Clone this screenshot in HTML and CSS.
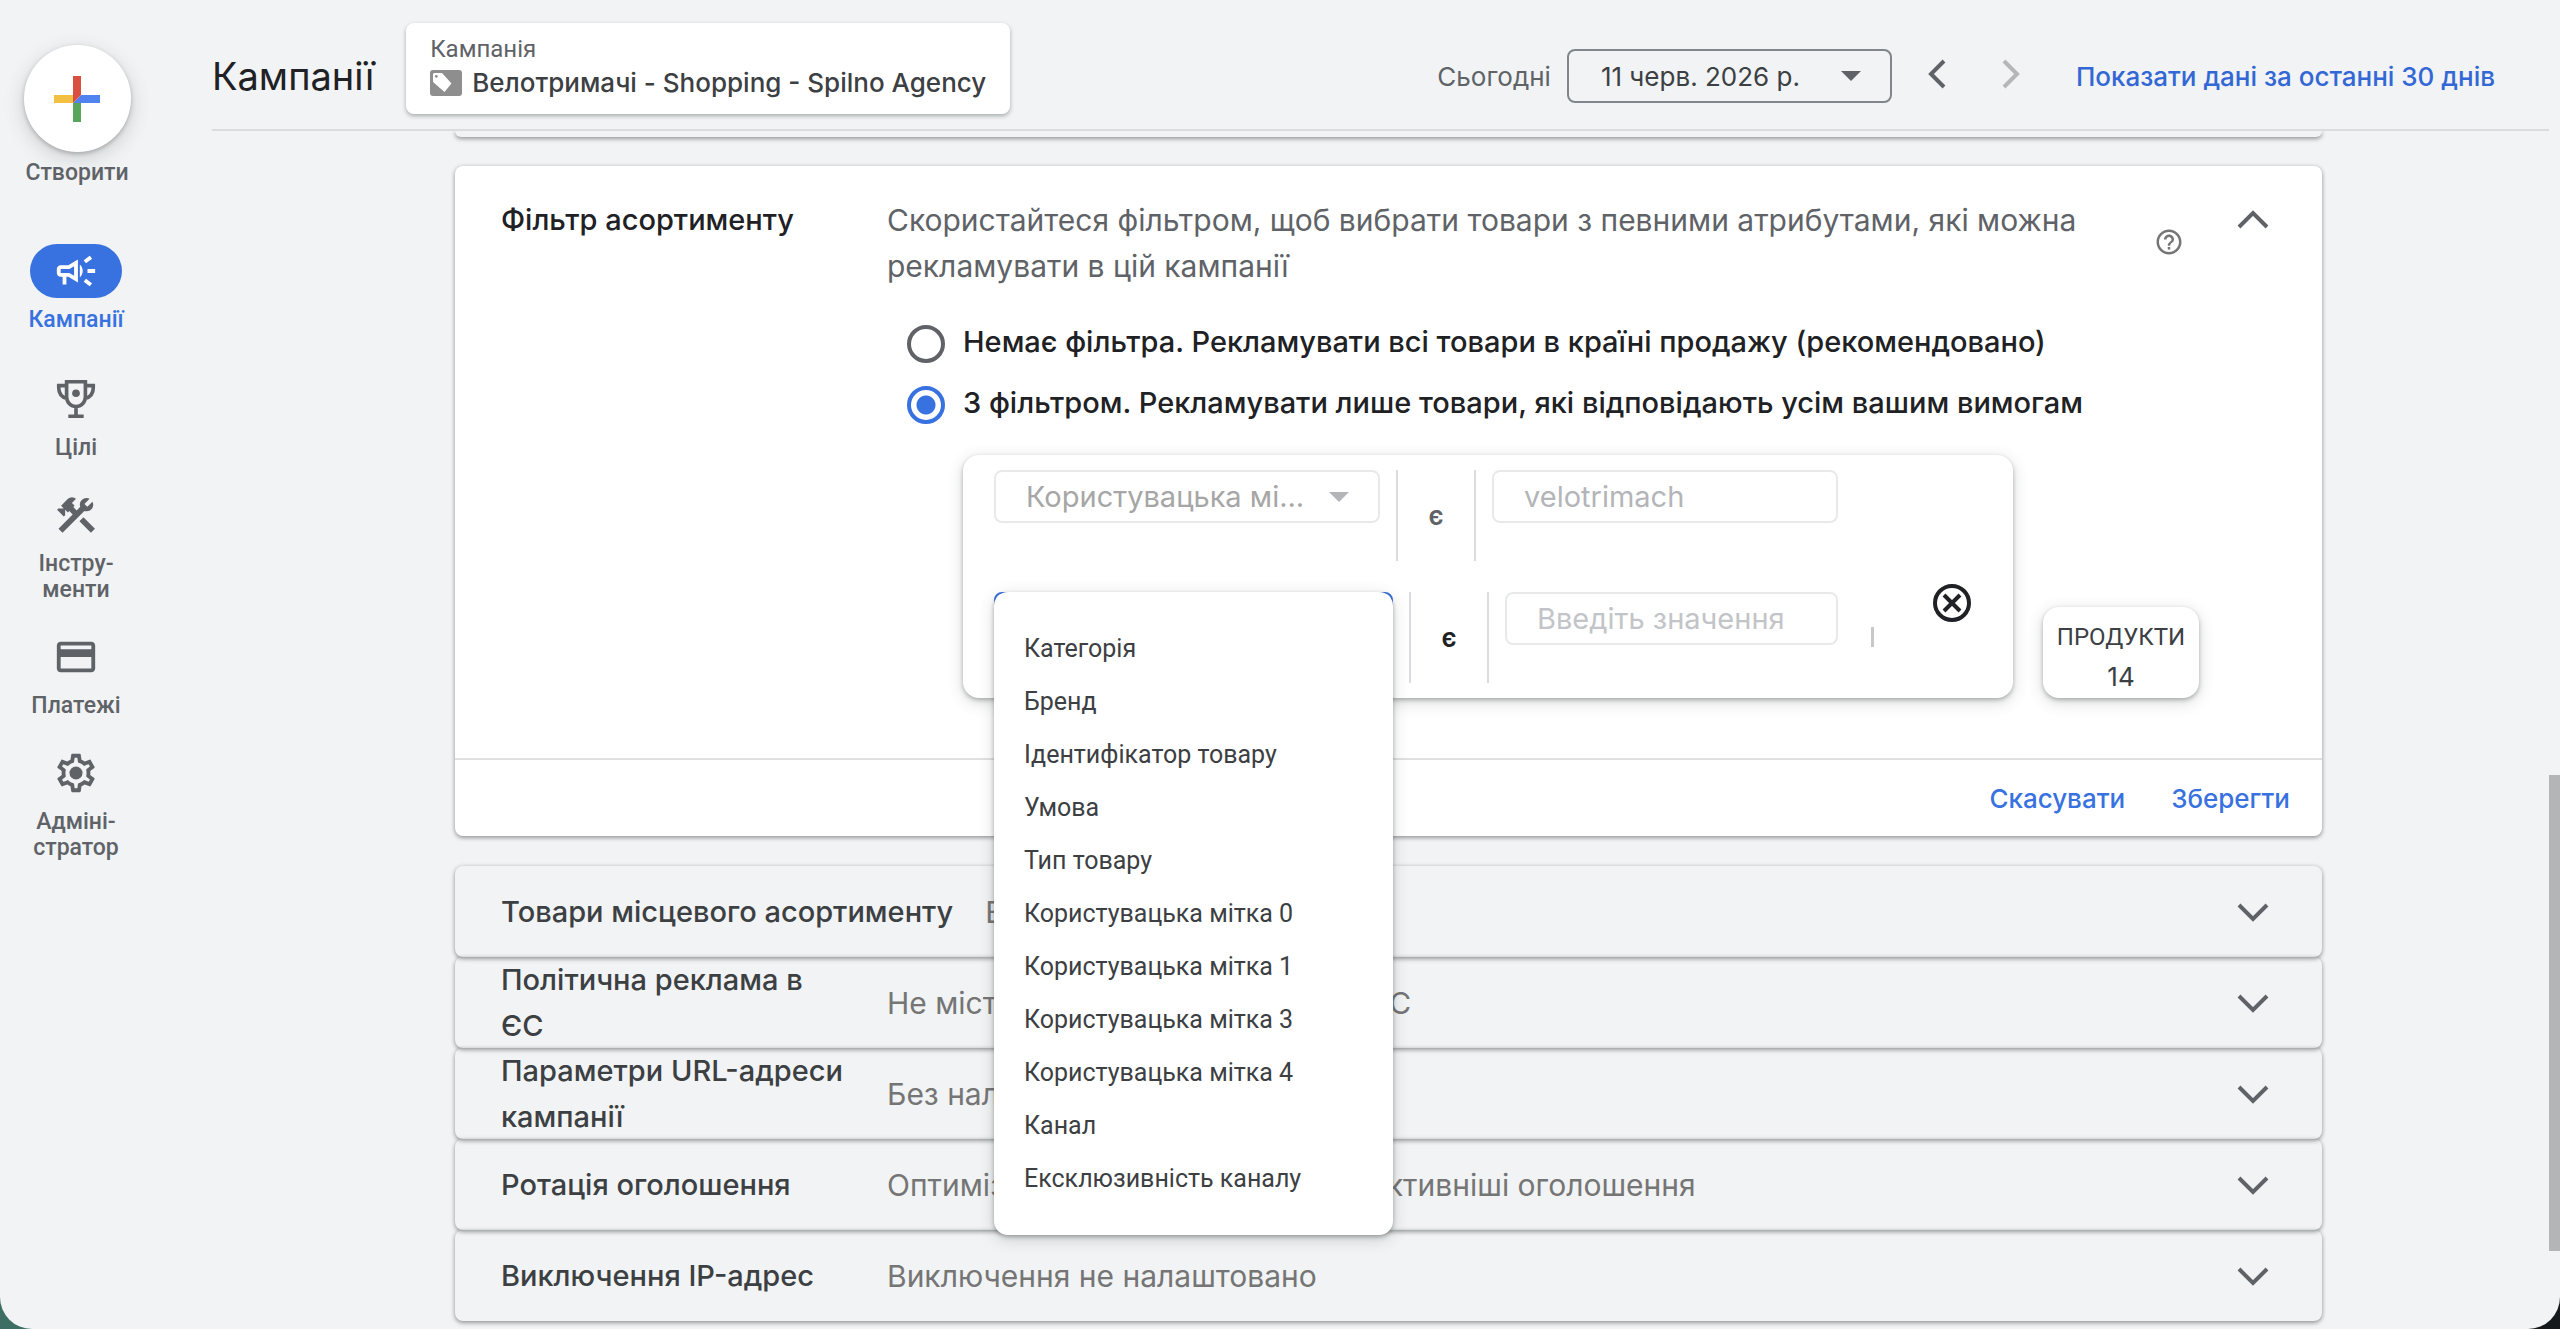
FILE: index.html
```html
<!DOCTYPE html>
<html lang="uk">
<head>
    <meta charset="UTF-8">
    <meta name="viewport" content="width=device-width, initial-scale=1.0">
    <title>Кампанії</title>
    <link rel="stylesheet" href="styles.css">
</head>
<body>
    <div class="app">
        <aside class="sidebar">
            <button class="create-btn" type="button">
                <span class="create-circle">
                    <svg viewBox="0 0 46 46" width="46" height="46">
                        <path fill="#f2c043" d="M0 19h19v8H0z"/>
                        <path fill="#58a55c" d="M19 27h8v19h-8z"/>
                        <path fill="#5083ef" d="M27 19h19v8H19z"/>
                        <path fill="#d95040" d="M19 0h8v19l-8 8z"/>
                    </svg>
                </span>
                Створити
            </button>
            <nav class="nav">
                <a class="nav-item active" href="#">
                    <span class="nav-icon">
                        <svg viewBox="0 0 24 24"><path d="M18 11v2h4v-2h-4zm-2 6.61c.96.71 2.21 1.65 3.2 2.39.4-.53.8-1.07 1.2-1.6-.99-.74-2.24-1.68-3.2-2.4-.4.54-.8 1.08-1.2 1.61zM20.4 5.6c-.4-.53-.8-1.07-1.2-1.6-.99.74-2.24 1.68-3.2 2.4.4.53.8 1.07 1.2 1.6.96-.72 2.21-1.65 3.2-2.4zM4 9c-1.1 0-2 .9-2 2v2c0 1.1.9 2 2 2h1v4h2v-4h1l5 3V6L8 9H4zm5.03 1.71L11 9.53v4.94l-1.97-1.18-.48-.29H4v-2h4.55l.48-.29zM15.5 12c0-1.33-.58-2.53-1.5-3.35v6.69c.92-.81 1.5-2.01 1.5-3.34z"/></svg>
                    </span>
                    Кампанії
                </a>
                <a class="nav-item" href="#">
                    <span class="nav-icon">
                        <svg viewBox="0 0 24 24">
                            <path fill="none" stroke="currentColor" stroke-width="1.9" d="M7.1 3h9.8v8a4.9 4.9 0 0 1-9.8 0zM7 5H3v1.2c0 2.7 1.6 4.8 4.4 5.6M17 5h4v1.2c0 2.7-1.6 4.8-4.4 5.6M12 16v5M8 21h8"/>
                            <circle cx="12" cy="9" r="2"/>
                        </svg>
                    </span>
                    Цілі
                </a>
                <a class="nav-item" href="#">
                    <span class="nav-icon">
                        <svg viewBox="0 0 24 24"><path d="M13.78 15.3l6 6 2.11-2.16-6-6-2.11 2.16M17.5 10.1c-.39 0-.81-.05-1.14-.19L4.97 21.25l-2.11-2.11 7.41-7.4L8.5 9.96l-.72.7-1.45-1.41v2.86l-.7.7-3.52-3.56.7-.7h2.81l-1.4-1.41 3.56-3.56a2.98 2.98 0 0 1 4.22 0L9.89 5.74l1.41 1.4-.71.71 1.79 1.78 1.82-1.88c-.14-.33-.2-.75-.2-1.12 0-1.97 1.56-3.52 3.5-3.52.59 0 1.11.14 1.58.42L16.41 6.2l1.5 1.5 2.67-2.67c.28.47.42.97.42 1.6 0 1.92-1.55 3.47-3.5 3.47z"/></svg>
                    </span>
                    Інстру-<br>менти
                </a>
                <a class="nav-item" href="#">
                    <span class="nav-icon">
                        <svg viewBox="0 0 24 24"><path d="M20 4H4c-1.11 0-1.99.89-1.99 2L2 18c0 1.11.89 2 2 2h16c1.11 0 2-.89 2-2V6c0-1.11-.89-2-2-2zm0 14H4v-6h16v6zm0-10H4V6h16v2z"/></svg>
                    </span>
                    Платежі
                </a>
                <a class="nav-item" href="#">
                    <span class="nav-icon">
                        <svg viewBox="0 0 24 24">
                            <path d="M19.43 12.98c.04-.32.07-.64.07-.98 0-.34-.03-.66-.07-.98l2.11-1.65c.19-.15.24-.42.12-.64l-2-3.46c-.09-.16-.26-.25-.44-.25-.06 0-.12.01-.17.03l-2.49 1c-.52-.4-1.08-.73-1.69-.98l-.38-2.65C14.46 2.18 14.25 2 14 2h-4c-.25 0-.46.18-.49.42l-.38 2.65c-.61.25-1.17.59-1.69.98l-2.49-1c-.06-.02-.12-.03-.18-.03-.17 0-.34.09-.43.25l-2 3.46c-.13.22-.07.49.12.64l2.11 1.65c-.04.32-.07.65-.07.98 0 .33.03.66.07.98l-2.11 1.65c-.19.15-.24.42-.12.64l2 3.46c.09.16.26.25.44.25.06 0 .12-.01.17-.03l2.49-1c.52.4 1.08.73 1.69.98l.38 2.65c.03.24.24.42.49.42h4c.25 0 .46-.18.49-.42l.38-2.65c.61-.25 1.17-.59 1.69-.98l2.49 1c.06.02.12.03.18.03.17 0 .34-.09.43-.25l2-3.46c.12-.22.07-.49-.12-.64l-2.11-1.65zm-1.98-1.71c.04.31.05.52.05.73 0 .21-.02.43-.05.73l-.14 1.13.89.7 1.08.84-.7 1.21-1.27-.51-1.04-.42-.9.68c-.43.32-.84.56-1.25.73l-1.06.43-.16 1.13-.2 1.35h-1.4l-.19-1.35-.16-1.13-1.06-.43c-.43-.18-.83-.41-1.23-.71l-.91-.7-1.06.43-1.27.51-.7-1.21 1.08-.84.89-.7-.14-1.13c-.03-.31-.05-.54-.05-.74s.02-.43.05-.73l.14-1.13-.89-.7-1.08-.84.7-1.21 1.27.51 1.04.42.9-.68c.43-.32.84-.56 1.25-.73l1.06-.43.16-1.13.2-1.35h1.39l.19 1.35.16 1.13 1.06.43c.43.18.83.41 1.23.71l.91.7 1.06-.43 1.27-.51.7 1.21-1.07.85-.89.7.14 1.13z"/>
                            <circle cx="12" cy="12" r="3.4"/>
                        </svg>
                    </span>
                    Адміні-<br>стратор
                </a>
            </nav>
        </aside>

        <main class="main">
            <header class="topbar">
                <h1>Кампанії</h1>
                <button class="campaign-card" type="button">
                    <span class="campaign-label">Кампанія</span>
                    <span class="campaign-name">
                        <svg viewBox="0 0 32 26" width="32" height="26">
                            <rect width="32" height="26" rx="3" fill="#8e8e8e"/>
                            <path fill="#fff" d="M3 4.500a1.500 1.500 0 0 1 1.500-1.500H11a2 2 0 0 1 1.500.6l9 9.900-7 8.500L3.600 12.500A2 2 0 0 1 3 11z"/>
                            <circle cx="6.300" cy="6.300" r="1.400" fill="#8e8e8e"/>
                        </svg>
                        Велотримачі - Shopping - Spilno Agency
                    </span>
                </button>
                <div class="date-range">
                    <span class="date-label">Сьогодні</span>
                    <button class="date-btn" type="button">
                        11 черв. 2026 р.
                        <svg viewBox="0 0 20 10" width="20" height="10"><path d="M0 0h20L10 10z"/></svg>
                    </button>
                    <button class="step-btn" type="button" aria-label="Назад">
                        <svg viewBox="0 0 18 30" width="18" height="30"><path d="M16 2L3 15l13 13"/></svg>
                    </button>
                    <button class="step-btn" type="button" aria-label="Вперед" disabled>
                        <svg viewBox="0 0 18 30" width="18" height="30"><path d="M2 2l13 13L2 28"/></svg>
                    </button>
                    <a class="last-days" href="#">Показати дані за останні 30 днів</a>
                </div>
            </header>

            <div class="content">
                <div class="panel-end"></div>

                <section class="card">
                    <div class="card-head">
                        <h2 class="row-title">Фільтр асортименту</h2>
                        <p class="card-desc">Скористайтеся фільтром, щоб вибрати товари з певними атрибутами, які можна рекламувати в цій кампанії</p>
                        <button class="help-btn" type="button" aria-label="Довідка">
                            <svg viewBox="0 0 24 24" width="30" height="30"><path d="M11 18h2v-2h-2v2zm1-16C6.480 2 2 6.480 2 12s4.480 10 10 10 10-4.480 10-10S17.520 2 12 2zm0 18c-4.410 0-8-3.590-8-8s3.590-8 8-8 8 3.590 8 8-3.590 8-8 8zm0-14c-2.210 0-4 1.790-4 4h2c0-1.100.9-2 2-2s2 .9 2 2c0 2-3 1.750-3 5h2c0-2.250 3-2.500 3-5 0-2.210-1.790-4-4-4z"/></svg>
                        </button>
                        <button class="toggle-btn" type="button" aria-label="Згорнути">
                            <svg class="chevron" viewBox="0 0 32 20" width="32" height="20"><path d="M2 17L16 3l14 14"/></svg>
                        </button>
                    </div>

                    <div class="filter">
                        <div class="options">
                            <label class="option"><input type="radio" name="filter"><span>Немає фільтра. Рекламувати всі товари в країні продажу (рекомендовано)</span></label>
                            <label class="option"><input type="radio" name="filter" checked><span>З фільтром. Рекламувати лише товари, які відповідають усім вашим вимогам</span></label>
                        </div>

                        <div class="filter-row">
                            <div class="conditions">
                                <div class="condition">
                                    <button class="select" type="button" disabled>
                                        Користувацька мі...
                                        <svg viewBox="0 0 20 10" width="20" height="10"><path d="M0 0h20L10 10z"/></svg>
                                    </button>
                                    <span class="operator">є</span>
                                    <input class="value" type="text" value="velotrimach" aria-label="Значення" disabled>
                                    <div class="actions"></div>
                                </div>
                                <div class="condition current">
                                    <div class="select-wrap">
                                        <button class="select" type="button" aria-label="Атрибут"></button>
                                        <ul class="menu">
                                            <li>Категорія</li>
                                            <li>Бренд</li>
                                            <li>Ідентифікатор товару</li>
                                            <li>Умова</li>
                                            <li>Тип товару</li>
                                            <li>Користувацька мітка 0</li>
                                            <li>Користувацька мітка 1</li>
                                            <li>Користувацька мітка 3</li>
                                            <li>Користувацька мітка 4</li>
                                            <li>Канал</li>
                                            <li>Ексклюзивність каналу</li>
                                        </ul>
                                    </div>
                                    <span class="operator">є</span>
                                    <input class="value" type="text" placeholder="Введіть значення" aria-label="Значення">
                                    <div class="actions">
                                        <span class="separator"></span>
                                        <button class="remove-btn" type="button" aria-label="Видалити">
                                            <svg viewBox="0 0 38 38" width="38" height="38"><circle cx="19" cy="19" r="17"/><path d="M11 11l16 16M27 11L11 27"/></svg>
                                        </button>
                                    </div>
                                </div>
                            </div>
                            <div class="products">
                                <span class="products-label">ПРОДУКТИ</span>
                                <span class="products-count">14</span>
                            </div>
                        </div>
                    </div>

                    <div class="card-actions">
                        <button class="text-btn" type="button">Скасувати</button>
                        <button class="text-btn" type="button">Зберегти</button>
                    </div>
                </section>

                <div class="rows">
                    <button class="row" type="button">
                        <span class="row-title long">Товари місцевого асортименту</span>
                        <span class="row-value">Вимкнено</span>
                        <svg class="chevron" viewBox="0 0 32 20" width="32" height="20"><path d="M2 3l14 14L30 3"/></svg>
                    </button>
                    <button class="row" type="button">
                        <span class="row-title">Політична реклама в ЄС</span>
                        <span class="row-value">Не містить політичну рекламу в ЄС</span>
                        <svg class="chevron" viewBox="0 0 32 20" width="32" height="20"><path d="M2 3l14 14L30 3"/></svg>
                    </button>
                    <button class="row" type="button">
                        <span class="row-title">Параметри URL-адреси кампанії</span>
                        <span class="row-value">Без налаштувань</span>
                        <svg class="chevron" viewBox="0 0 32 20" width="32" height="20"><path d="M2 3l14 14L30 3"/></svg>
                    </button>
                    <button class="row" type="button">
                        <span class="row-title">Ротація оголошення</span>
                        <span class="row-value">Оптимізувати: показувати найефективніші оголошення</span>
                        <svg class="chevron" viewBox="0 0 32 20" width="32" height="20"><path d="M2 3l14 14L30 3"/></svg>
                    </button>
                    <button class="row" type="button">
                        <span class="row-title">Виключення IP-адрес</span>
                        <span class="row-value">Виключення не налаштовано</span>
                        <svg class="chevron" viewBox="0 0 32 20" width="32" height="20"><path d="M2 3l14 14L30 3"/></svg>
                    </button>
                </div>
            </div>
        </main>
        <div class="scroll-thumb"></div>
    </div>
</body>
</html>
```

FILE: styles.css
```css
* {
    box-sizing: border-box;
}
body {
    margin: 0;
    background: linear-gradient(to right, #3d6e63 50%, #16191b 50%);
    font-family: Inter, "Noto Sans", sans-serif;
    font-size: 29px;
    color: #202124;
}
button {
    margin: 0;
    padding: 0;
    border: none;
    background: none;
    font: inherit;
    color: inherit;
    cursor: pointer;
}
svg {
    display: block;
    flex: none;
    fill: currentColor;
}
a {
    text-decoration: none;
}
.app {
    position: relative;
    display: flex;
    min-height: 100vh;
    background: #f1f3f4;
    border-radius: 0 0 32px 32px;
    overflow: hidden;
}

/* left navigation */
.sidebar {
    flex: none;
    width: 152px;
    padding-top: 45px;
    font-family: Roboto, sans-serif;
    font-size: 23px;
    font-weight: 500;
    line-height: 26px;
    color: #5f6368;
    text-align: center;
}
.create-btn {
    display: flex;
    flex-direction: column;
    align-items: center;
    gap: 8px;
    width: 100%;
    padding-left: 2px;
}
.create-circle {
    display: flex;
    align-items: center;
    justify-content: center;
    width: 107px;
    height: 107px;
    border-radius: 50%;
    background: #fff;
    box-shadow: 0 2px 4px rgba(60, 64, 67, 0.3), 0 6px 20px rgba(60, 64, 67, 0.2);
}
.nav {
    display: flex;
    flex-direction: column;
    gap: 27px;
    margin-top: 58px;
}
.nav-item {
    display: block;
    color: inherit;
}
.nav-icon {
    display: flex;
    align-items: center;
    justify-content: center;
    width: 92px;
    height: 54px;
    margin: 0 auto 9px;
    border-radius: 27px;
}
.nav-icon svg {
    width: 46px;
    height: 46px;
}
.nav-item.active {
    margin-bottom: 12px;
    color: #3871e0;
}
.nav-item.active .nav-icon {
    background: #3871e0;
    color: #fff;
}

/* top bar */
.main {
    flex: 1;
    min-width: 0;
    padding: 0 11px 8px 60px;
}
.topbar {
    display: flex;
    align-items: center;
    height: 131px;
    padding: 23px 54px 0 0;
    border-bottom: 2px solid #dadce0;
}
h1 {
    margin: 0 32px 0 0;
    font-size: 38px;
    font-weight: 400;
}
.campaign-card {
    display: flex;
    flex-direction: column;
    align-self: flex-start;
    padding: 11px 24px 12px;
    border-radius: 8px;
    background: #fff;
    box-shadow: 0 2px 4px rgba(60, 64, 67, 0.4);
    text-align: left;
}
.campaign-label {
    font-family: Roboto, sans-serif;
    font-size: 24px;
    line-height: 30px;
    color: #5f6368;
}
.campaign-name {
    display: flex;
    align-items: center;
    gap: 10px;
    font-size: 26px;
    font-weight: 500;
    line-height: 38px;
    color: #3c4043;
}
.date-range {
    display: flex;
    align-items: center;
    margin-left: auto;
    font-size: 26px;
    color: #3c4043;
}
.date-label {
    margin-right: 16px;
    color: #5f6368;
}
.date-btn {
    display: flex;
    align-items: center;
    justify-content: space-between;
    width: 325px;
    height: 54px;
    margin-right: 36px;
    padding: 0 29px 0 32px;
    border: 2px solid #80868b;
    border-radius: 8px;
}
.date-btn svg {
    color: #5f6368;
}
.step-btn {
    margin-right: 56px;
    padding-bottom: 4px;
    color: #5f6368;
}
.step-btn svg {
    fill: none;
    stroke: currentColor;
    stroke-width: 4;
}
.step-btn:disabled {
    color: #b4b6b8;
}
.last-days {
    font-weight: 500;
    color: #3367d6;
}

/* settings cards */
.content {
    padding: 0 227px 0 243px;
}
.panel-end,
.card,
.row {
    border-radius: 8px;
    box-shadow: 0 2px 4px rgba(60, 64, 67, 0.45), 0 0 4px rgba(60, 64, 67, 0.15);
}
.panel-end {
    height: 6px;
    border-radius: 0 0 8px 8px;
    clip-path: inset(0 -8px -8px -8px);
}
.card {
    margin-top: 29px;
    background: #fff;
}
.card-head {
    display: flex;
    align-items: flex-start;
    padding: 31px 53px 0 46px;
    line-height: 46px;
}
.row-title {
    flex: none;
    width: 386px;
    margin: 0;
    padding-right: 40px;
    font-size: 29px;
    font-weight: 500;
}
.card-desc {
    flex: 1;
    margin: 0;
    padding-right: 60px;
    font-size: 30px;
    color: #5f6368;
}
.help-btn {
    margin: 30px 53px 0 0;
    color: #757575;
}
.toggle-btn {
    height: 46px;
}
.chevron {
    fill: none;
    stroke: #5f6368;
    stroke-width: 4;
}
.filter {
    padding: 24px 123px 60px 452px;
}
.options {
    margin-bottom: 20px;
    font-weight: 500;
}
.option {
    display: flex;
    align-items: center;
    gap: 18px;
    height: 61px;
}
.option span {
    padding-bottom: 4px;
}
.option input {
    appearance: none;
    flex: none;
    width: 38px;
    height: 38px;
    margin: 0;
    border: 4px solid #5f6368;
    border-radius: 50%;
}
.option input:checked {
    border-color: #3871e0;
    background: radial-gradient(circle, #3871e0 9px, #fff 10px);
}
.filter-row {
    display: flex;
    align-items: flex-end;
    gap: 30px;
    padding-left: 56px;
}
.conditions,
.products {
    border-radius: 16px;
    background: #fff;
    box-shadow: 0 2px 4px rgba(60, 64, 67, 0.35), 0 4px 16px rgba(60, 64, 67, 0.2);
}
.conditions {
    display: flex;
    flex: 1;
    flex-direction: column;
    gap: 31px;
    min-width: 0;
    padding: 15px 31px;
}
.condition {
    display: flex;
    align-items: flex-start;
    gap: 16px;
}
.select,
.value {
    height: 53px;
    border: 2px solid #e8e9ea;
    border-radius: 8px;
    background: #fff;
}
.select {
    display: flex;
    flex: none;
    align-items: center;
    justify-content: space-between;
    width: 386px;
    padding: 0 29px 0 30px;
    color: #a6a6a6;
    white-space: nowrap;
}
.select svg {
    color: #b3b5b8;
}
.operator {
    display: flex;
    flex: none;
    align-items: center;
    justify-content: center;
    width: 80px;
    height: 91px;
    border: solid #dadce0;
    border-width: 0 2px;
    font-size: 26px;
    font-weight: 600;
    color: #5f6368;
}
.value {
    flex: 1;
    min-width: 0;
    padding: 0 30px;
    font: inherit;
    color: #b3b5b8;
}
.value::placeholder {
    color: #c2c4c7;
}
.current .operator {
    color: #202124;
}
.actions {
    display: flex;
    flex: none;
    align-items: flex-start;
    justify-content: space-between;
    width: 128px;
    padding: 0 11px 0 17px;
}
.separator {
    width: 3px;
    height: 20px;
    margin-top: 35px;
    background: #c6c8ca;
}
.remove-btn {
    margin-top: -8px;
}
.remove-btn svg {
    fill: none;
    stroke: #202124;
    stroke-width: 4;
}
.select-wrap {
    position: relative;
    flex: none;
    width: 399px;
}
.select-wrap .select {
    width: 100%;
    border-color: #3871e0;
}
.menu {
    position: absolute;
    z-index: 2;
    top: 0;
    left: 0;
    width: 100%;
    margin: 0;
    padding: 30px;
    border-radius: 14px;
    background: #fff;
    box-shadow: 0 2px 4px rgba(60, 64, 67, 0.4), 0 4px 16px rgba(60, 64, 67, 0.2);
    font-family: Roboto, sans-serif;
    font-size: 25px;
    line-height: 53px;
    color: #3c4043;
    list-style: none;
    white-space: nowrap;
}
.products {
    display: flex;
    flex: none;
    flex-direction: column;
    align-items: center;
    justify-content: center;
    width: 156px;
    height: 91px;
    padding-top: 8px;
    color: #3c4043;
}
.products-label {
    font-family: Roboto, sans-serif;
    font-size: 24px;
    line-height: 40px;
}
.products-count {
    font-size: 26px;
    line-height: 40px;
}
.card-actions {
    display: flex;
    align-items: center;
    justify-content: flex-end;
    gap: 46px;
    height: 78px;
    padding-right: 32px;
    border-top: 2px solid #e0e0e0;
}
.text-btn {
    font-size: 26px;
    font-weight: 500;
    color: #3871e0;
}

/* collapsed settings */
.rows {
    margin-top: 30px;
}
.row {
    display: flex;
    align-items: center;
    width: 100%;
    height: 91px;
    padding: 0 53px 0 46px;
    line-height: 46px;
    text-align: left;
}
.row .row-title {
    color: #3c4043;
}
.row .long {
    width: auto;
    padding-right: 32px;
}
.row-value {
    flex: 1;
    font-size: 30px;
    color: #757575;
}

/* page scroll position */
.scroll-thumb {
    position: absolute;
    top: 775px;
    right: 0;
    width: 11px;
    height: 476px;
    background: #b4b5b7;
}
```
